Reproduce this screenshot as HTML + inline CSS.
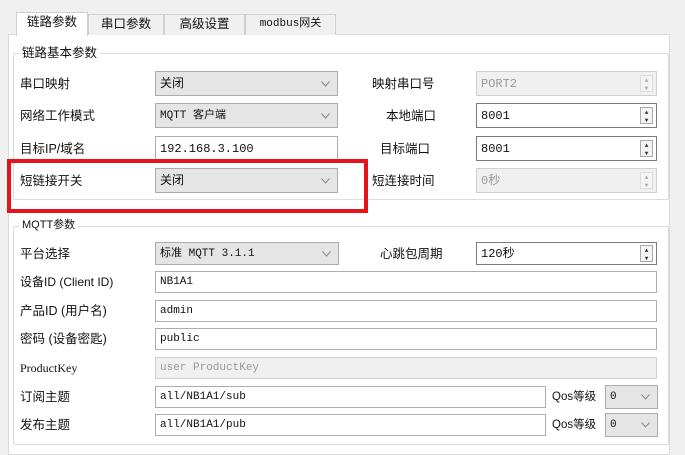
<!DOCTYPE html>
<html><head><meta charset="utf-8"><style>
*{box-sizing:border-box;margin:0;padding:0}
body{width:685px;height:455px;background:#f0f0f0;position:relative;overflow:hidden;font-family:"Liberation Sans","Noto Sans CJK SC",sans-serif;font-size:12.5px;color:#111}
.a{position:absolute}
.lbl{position:absolute;line-height:16px;white-space:nowrap}
.box{position:absolute;border:1px solid #adadad;background:#fff;padding-left:4px;font-family:"Liberation Mono","Noto Sans CJK SC",monospace;font-size:12px;white-space:nowrap;overflow:hidden}
.t{position:absolute;left:4px;line-height:14px;height:14px}
.h25 .t{top:5px}.h22 .t{top:3px}.h23 .t{top:4px}.h24 .t{top:4px}
.cb{background:#e5e5e5;border-color:#acacac}
.dis{background:#f0f0f0;border-color:#d0d0d0;color:#9a9a9a}
.arr{position:absolute;right:7px;top:50%;margin-top:-3px;width:9px;height:6px}
.spin{position:absolute;right:3px;top:3px;bottom:3px;width:13px;border:1px solid #aaa;background:#f4f4f4;font-size:6px;line-height:8px;text-align:center;color:#333;padding-top:1px}
.grp{position:absolute;border:1px solid #dcdcdc;border-radius:2px}
.gt{position:absolute;background:#fff;padding:0 3px;line-height:16px}
.tab{position:absolute;top:14px;height:21px;border:1px solid #d0d0d0;border-bottom:none;background:#f0f0f0;line-height:19px;text-align:center}
</style></head><body>
<svg width="0" height="0" style="position:absolute"><defs><symbol id="ch" viewBox="0 0 9 6"><path d="M0.5 0.5 L4.5 5 L8.5 0.5" fill="none" stroke="#888" stroke-width="1"/></symbol></defs></svg>
<div class="a" style="left:8px;top:34px;width:662px;height:421px;background:#fff;border:1px solid #d9d9d9"></div>
<div class="tab" style="left:16px;width:72px;background:#fff;top:12px;height:24px">链路参数</div>
<div class="tab" style="left:88px;width:76px">串口参数</div>
<div class="tab" style="left:164px;width:81px">高级设置</div>
<div class="tab" style="left:245px;width:91px;font-family:'Liberation Mono','Noto Sans CJK SC',monospace;font-size:11px">modbus网关</div>

<div class="grp" style="left:13px;top:53px;width:656px;height:147px"></div>
<div class="gt" style="left:19px;top:45px">链路基本参数</div>

<div class="lbl" style="left:20px;top:76px">串口映射</div>
<div class="box cb h25" style="left:155px;top:71px;width:183px;height:25px"><span class="t">关闭</span><svg class="arr"><use href="#ch"/></svg></div>
<div class="lbl" style="left:372px;top:76px">映射串口号</div>
<div class="box dis h25" style="left:476px;top:71px;width:181px;height:25px"><span class="t">PORT2</span><div class="spin" style="border-color:#ddd;color:#aaa">▲<br>▼</div></div>

<div class="lbl" style="left:20px;top:108px">网络工作模式</div>
<div class="box cb h25" style="left:155px;top:103px;width:183px;height:25px;font-size:11px"><span class="t">MQTT 客户端</span><svg class="arr"><use href="#ch"/></svg></div>
<div class="lbl" style="left:386px;top:108px">本地端口</div>
<div class="box h25" style="left:476px;top:103px;width:181px;height:25px;border-color:#7a7a7a"><span class="t">8001</span><div class="spin">▲<br>▼</div></div>

<div class="lbl" style="left:20px;top:141px">目标IP/域名</div>
<div class="box h25" style="left:155px;top:136px;width:183px;height:25px"><span class="t">192.168.3.100</span></div>
<div class="lbl" style="left:380px;top:141px">目标端口</div>
<div class="box h25" style="left:476px;top:136px;width:181px;height:25px;border-color:#7a7a7a"><span class="t">8001</span><div class="spin">▲<br>▼</div></div>

<div class="lbl" style="left:20px;top:173px">短链接开关</div>
<div class="box cb h25" style="left:155px;top:168px;width:183px;height:25px"><span class="t">关闭</span><svg class="arr"><use href="#ch"/></svg></div>
<div class="lbl" style="left:372px;top:173px">短连接时间</div>
<div class="box dis h25" style="left:476px;top:168px;width:181px;height:25px"><span class="t">0秒</span><div class="spin" style="border-color:#ddd;color:#aaa">▲<br>▼</div></div>

<div class="a" style="left:7px;top:159px;width:361px;height:54px;border:4px solid #e5131a"></div>

<div class="grp" style="left:13px;top:226px;width:656px;height:219px"></div>
<div class="gt" style="left:19px;top:217px;font-size:11px">MQTT参数</div>

<div class="lbl" style="left:20px;top:246px">平台选择</div>
<div class="box cb h23" style="left:155px;top:242px;width:184px;height:23px;font-size:11px"><span class="t">标准 MQTT 3.1.1</span><svg class="arr"><use href="#ch"/></svg></div>
<div class="lbl" style="left:380px;top:246px">心跳包周期</div>
<div class="box h23" style="left:476px;top:242px;width:181px;height:23px;border-color:#7a7a7a"><span class="t">120秒</span><div class="spin" style="top:2px;bottom:2px">▲<br>▼</div></div>

<div class="lbl" style="left:20px;top:274px;font-size:12px">设备ID (Client ID)</div>
<div class="box h22" style="left:155px;top:271px;width:502px;height:22px;font-size:11px"><span class="t">NB1A1</span></div>

<div class="lbl" style="left:20px;top:303px">产品ID (用户名)</div>
<div class="box h22" style="left:155px;top:300px;width:502px;height:22px;font-size:11px"><span class="t">admin</span></div>

<div class="lbl" style="left:20px;top:331px">密码 (设备密匙)</div>
<div class="box h22" style="left:155px;top:328px;width:502px;height:22px;font-size:11px"><span class="t">public</span></div>

<div class="lbl" style="left:20px;top:360px;font-family:'Liberation Serif',serif;font-size:12px">ProductKey</div>
<div class="box dis h22" style="left:155px;top:357px;width:502px;height:22px;font-size:11px"><span class="t">user ProductKey</span></div>

<div class="lbl" style="left:20px;top:389px">订阅主题</div>
<div class="box h22" style="left:155px;top:386px;width:391px;height:22px;font-size:11px"><span class="t">all/NB1A1/sub</span></div>
<div class="lbl" style="left:552px;top:389px;font-size:11.5px">Qos等级</div>
<div class="box cb h24" style="left:605px;top:385px;width:53px;height:24px;font-size:11px"><span class="t">0</span><svg class="arr"><use href="#ch"/></svg></div>

<div class="lbl" style="left:20px;top:417px">发布主题</div>
<div class="box h22" style="left:155px;top:414px;width:391px;height:22px;font-size:11px"><span class="t">all/NB1A1/pub</span></div>
<div class="lbl" style="left:552px;top:417px;font-size:11.5px">Qos等级</div>
<div class="box cb h24" style="left:605px;top:413px;width:53px;height:24px;font-size:11px"><span class="t">0</span><svg class="arr"><use href="#ch"/></svg></div>
</body></html>
